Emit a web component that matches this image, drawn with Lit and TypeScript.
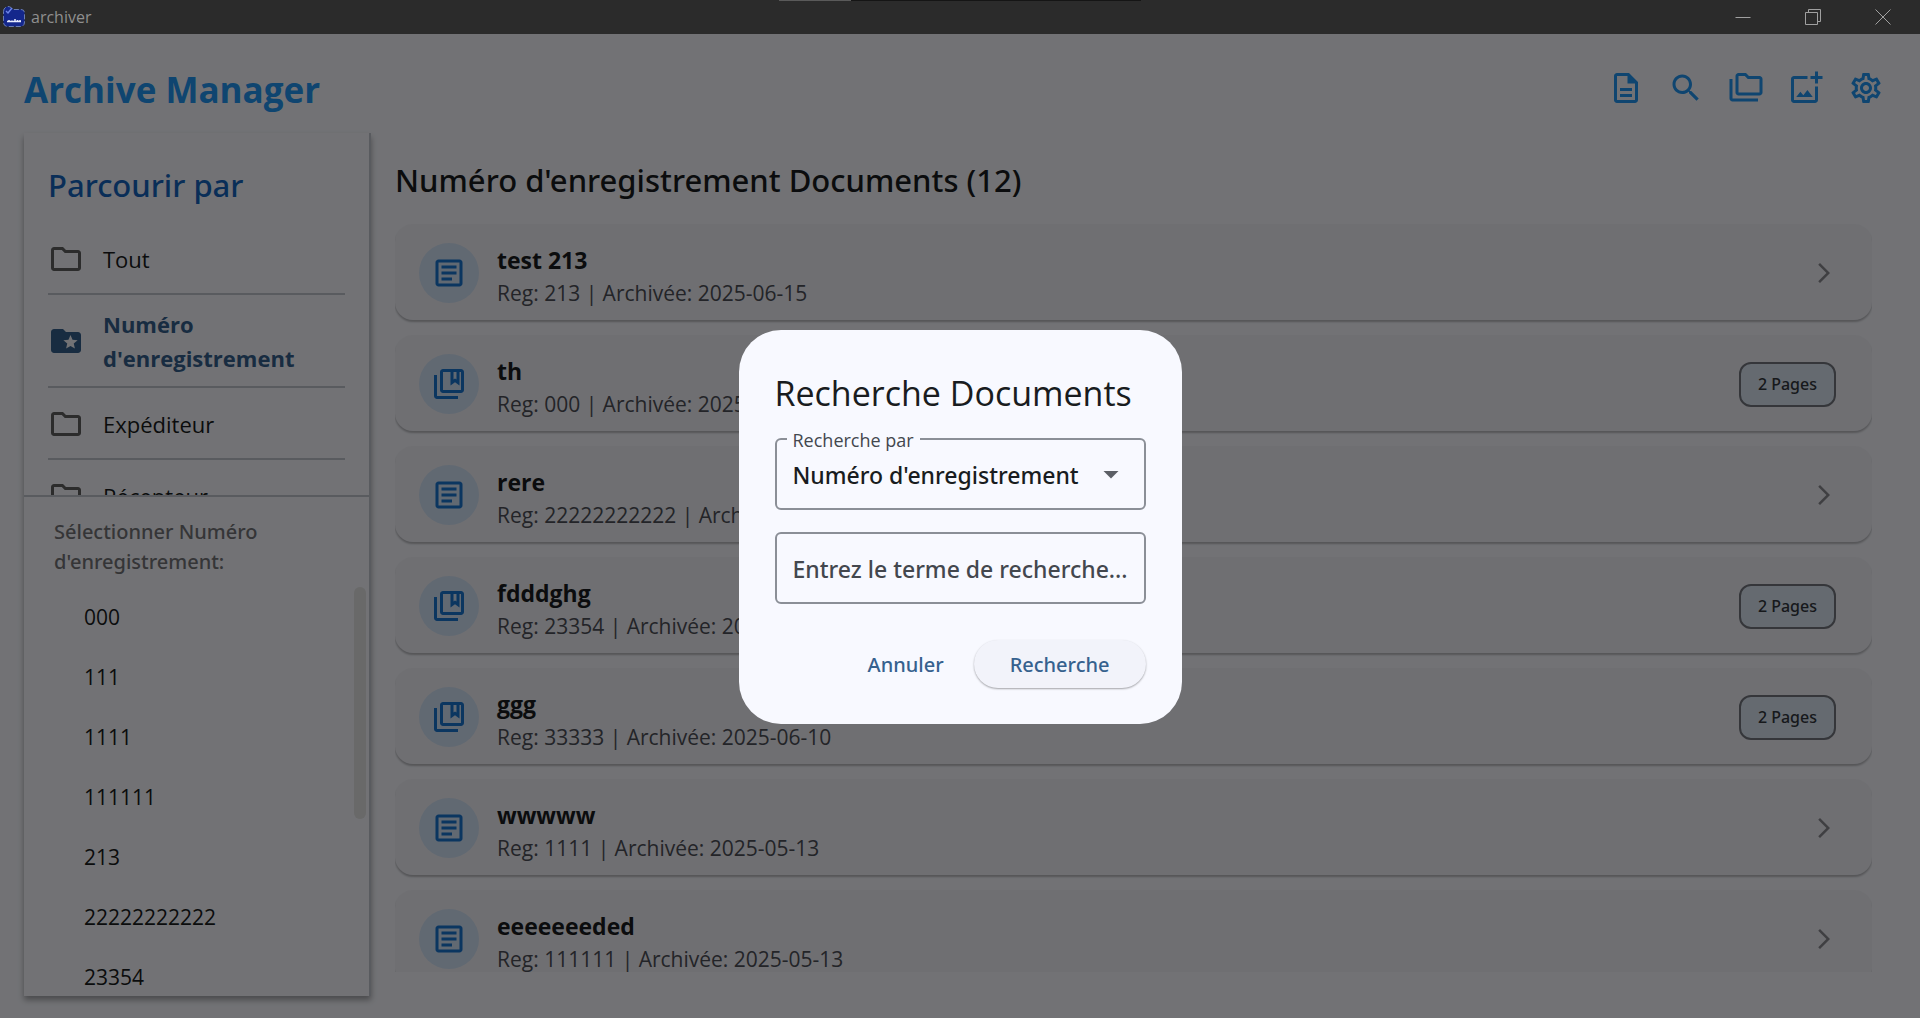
import { LitElement, html, css, svg } from "lit";
import { customElement, property } from "lit/decorators.js";
import { classMap } from "lit/directives/class-map.js";

const ICONS: Record<string, string> = {
  description:
    "M8 16h8v2H8zm0-4h8v2H8zm6-10H6c-1.1 0-2 .9-2 2v16c0 1.1.89 2 1.99 2H18c1.1 0 2-.9 2-2V8l-6-6zm4 18H6V4h7v5h5v11z",
  search:
    "M15.5 14h-.79l-.28-.27C15.41 12.59 16 11.11 16 9.5 16 5.91 13.09 3 9.5 3S3 5.91 3 9.5 5.91 16 9.5 16c1.61 0 3.09-.59 4.23-1.57l.27.28v.79l5 4.99L20.49 19l-4.99-5zm-6 0C7.01 14 5 11.99 5 9.5S7.01 5 9.5 5 14 7.01 14 9.5 11.99 14 9.5 14z",
  folders:
    "M3 19h17v2H3c-1.1 0-2-.9-2-2V6h2v13zM23 6v9c0 1.1-.9 2-2 2H7c-1.1 0-2-.9-2-2l.01-11c0-1.1.89-2 1.99-2h5l2 2h7c1.1 0 2 .9 2 2zM7 15h14V6h-7.83l-2-2H7v11z",
  addPhoto:
    "M18 20H4V6h9V4H4c-1.1 0-2 .9-2 2v14c0 1.1.9 2 2 2h14c1.1 0 2-.9 2-2v-9h-2v9zm-7.79-3.17-1.96-2.36L5.5 18h11l-3.54-4.71zM20 4V1h-2v3h-3c.01.01 0 2 0 2h3v2.99c.01.01 2 0 2 0V6h3V4h-3z",
  settings:
    "M19.43 12.98c.04-.32.07-.64.07-.98 0-.34-.03-.66-.07-.98l2.11-1.65c.19-.15.24-.42.12-.64l-2-3.46c-.09-.16-.26-.25-.44-.25-.06 0-.12.01-.17.03l-2.49 1c-.52-.4-1.08-.73-1.69-.98l-.38-2.65C14.46 2.18 14.25 2 14 2h-4c-.25 0-.46.18-.49.42l-.38 2.65c-.61.25-1.17.59-1.69.98l-2.49-1c-.06-.02-.12-.03-.18-.03-.17 0-.34.09-.43.25l-2 3.46c-.13.22-.07.49.12.64l2.11 1.65c-.04.32-.07.65-.07.98 0 .33.03.66.07.98l-2.11 1.65c-.19.15-.24.42-.12.64l2 3.46c.09.16.26.25.44.25.06 0 .12-.01.17-.03l2.49-1c.52.4 1.08.73 1.69.98l.38 2.65c.03.24.24.42.49.42h4c.25 0 .46-.18.49-.42l.38-2.65c.61-.25 1.17-.59 1.69-.98l2.49 1c.06.02.12.03.18.03.17 0 .34-.09.43-.25l2-3.46c.12-.22.07-.49-.12-.64l-2.11-1.65zm-1.98-1.71c.04.31.05.52.05.73 0 .21-.02.43-.05.73l-.14 1.13.89.7 1.08.84-.7 1.21-1.27-.51-1.04-.42-.9.68c-.43.32-.84.56-1.25.73l-1.06.43-.16 1.13-.2 1.35h-1.4l-.19-1.35-.16-1.13-1.06-.43c-.43-.18-.83-.41-1.23-.71l-.91-.7-1.06.43-1.27.51-.7-1.21 1.08-.84.89-.7-.14-1.13c-.03-.31-.05-.54-.05-.74s.02-.43.05-.73l.14-1.13-.89-.7-1.08-.84.7-1.21 1.27.51 1.04.42.9-.68c.43-.32.84-.56 1.25-.73l1.06-.43.16-1.13.2-1.35h1.39l.19 1.35.16 1.13 1.06.43c.43.18.83.41 1.23.71l.91.7 1.06-.43 1.27-.51.7 1.21-1.07.85-.89.7.14 1.13zM12 8c-2.21 0-4 1.79-4 4s1.79 4 4 4 4-1.79 4-4-1.79-4-4-4zm0 6c-1.1 0-2-.9-2-2s.9-2 2-2 2 .9 2 2-.9 2-2 2z",
  folder:
    "M9.17 6l2 2H20v10H4V6h5.17M10 4H4c-1.1 0-1.99.9-1.99 2L2 18c0 1.1.9 2 2 2h16c1.1 0 2-.9 2-2V8c0-1.1-.9-2-2-2h-8l-2-2z",
  folderStar:
    "M20 6h-8l-2-2H4c-1.1 0-1.99.9-1.99 2L2 18c0 1.1.9 2 2 2h16c1.1 0 2-.9 2-2V8c0-1.1-.9-2-2-2zM17.94 17L15 15.28 12.06 17l.78-3.33-2.59-2.24 3.41-.29L15 8l1.34 3.14 3.41.29-2.59 2.24.78 3.33z",
  article:
    "M19 5v14H5V5h14m0-2H5c-1.1 0-2 .9-2 2v14c0 1.1.9 2 2 2h14c1.1 0 2-.9 2-2V5c0-1.1-.9-2-2-2zM14 17H7v-2h7v2zm3-4H7v-2h10v2zm0-4H7V7h10v2z",
  bookmarks:
    "M4 6H2v14c0 1.1.9 2 2 2h14v-2H4V6zm16-4H8c-1.1 0-2 .9-2 2v12c0 1.1.9 2 2 2h12c1.1 0 2-.9 2-2V4c0-1.1-.9-2-2-2zm-3 2v5l-1-.75L15 9V4h2zm3 12H8V4h5v9l3-2.25L19 13V4h1v12z",
  forward: "M6.23 20.23L8 22l10-10L8 2 6.23 3.77 14.46 12z",
  dropdown: "M7 10l5 5 5-5z",
};

@customElement("app-icon")
export class AppIcon extends LitElement {
  @property() name = "folder";

  static styles = css`
    :host {
      display: block;
      flex: none;
      width: 36px;
      height: 36px;
    }
    .glyph {
      display: block;
      width: 100%;
      height: 100%;
      fill: currentColor;
      fill-rule: evenodd;
    }
  `;

  render() {
    return html`<svg class="glyph" viewBox="0 0 24 24" aria-hidden="true">
      ${svg`<path d=${ICONS[this.name]}></path>`}
    </svg>`;
  }
}

interface Doc {
  title: string;
  reg: string;
  date: string;
  pages?: number;
}

@customElement("document-card")
export class DocumentCard extends LitElement {
  @property({ attribute: false }) doc!: Doc;

  static styles = css`
    :host {
      display: block;
      flex: none;
    }
    .card {
      display: flex;
      align-items: center;
      gap: 18px;
      width: 100%;
      height: 96px;
      padding: 2px 36px 0 24px;
      box-sizing: border-box;
      border: 0;
      border-radius: 18px;
      background: #f2f2f9;
      box-shadow: 0 2px 2px rgba(0, 0, 0, 0.25);
      font: inherit;
      text-align: left;
    }
    .avatar {
      display: grid;
      place-items: center;
      flex: none;
      width: 60px;
      height: 60px;
      border-radius: 50%;
      background: #d3e4f9;
      color: #1976d2;
    }
    .text {
      flex: 1;
      min-width: 0;
      padding-top: 8px;
    }
    .title {
      display: block;
      font-size: 23px;
      line-height: 32px;
      font-weight: 700;
      color: #191c20;
    }
    .meta {
      display: block;
      font-size: 21px;
      line-height: 34px;
      color: #4e5058;
    }
    .pages {
      padding: 0 17px;
      border: 2px solid #73777f;
      border-radius: 12px;
      background: #dce8f5;
      color: #33373d;
      font-family: var(--medium-font);
      font-size: 16px;
      line-height: 41px;
      font-weight: 500;
    }
    .arrow {
      width: 24px;
      height: 24px;
      color: #8a8a90;
    }
  `;

  render() {
    const { title, reg, date, pages } = this.doc;
    return html`<button class="card" type="button">
      <span class="avatar">
        <app-icon name=${pages ? "bookmarks" : "article"}></app-icon>
      </span>
      <span class="text">
        <span class="title">${title}</span>
        <span class="meta">Reg: ${reg} | Archivée: ${date}</span>
      </span>
      ${pages
        ? html`<span class="pages">${pages} Pages</span>`
        : html`<app-icon class="arrow" name="forward"></app-icon>`}
    </button>`;
  }
}

@customElement("browse-panel")
export class BrowsePanel extends LitElement {
  private categories = ["Tout", "Numéro d'enregistrement", "Expéditeur", "Récepteur"];
  private selected = "Numéro d'enregistrement";
  private values = ["000", "111", "1111", "111111", "213", "22222222222", "23354"];

  static styles = css`
    :host {
      display: flex;
      flex-direction: column;
      flex: none;
      width: 347px;
      box-sizing: border-box;
      border-right: 2px solid #c3c6cf;
      background: #f8f9ff;
      box-shadow: 0 4px 6px rgba(0, 0, 0, 0.35);
    }
    .categories {
      flex: 0 0 362px;
      box-sizing: border-box;
      overflow: hidden;
      padding: 24px 24px 0;
    }
    .heading {
      margin: 0 0 10px;
      font-family: var(--medium-font);
      font-size: 31px;
      line-height: 56px;
      font-weight: 500;
      color: #1565c0;
    }
    .list {
      margin: 0;
      padding: 0;
      list-style: none;
    }
    .entry {
      border-bottom: 2px solid #c3c6cf;
    }
    .category {
      display: flex;
      align-items: center;
      gap: 19px;
      width: 100%;
      min-height: 70px;
      padding: 12px 0 11px;
      border: 0;
      background: none;
      color: #191c20;
      font: inherit;
      font-size: 22px;
      line-height: 34px;
      text-align: left;
    }
    .category app-icon {
      color: #616161;
    }
    .category.on,
    .category.on app-icon {
      color: #36618e;
      font-weight: 700;
    }
    .values {
      display: flex;
      flex-direction: column;
      flex: 1;
      min-height: 0;
      border-top: 2px solid #c3c6cf;
    }
    .prompt {
      margin: 0;
      padding: 20px 30px 10px;
      font-family: var(--medium-font);
      font-size: 20px;
      line-height: 30px;
      font-weight: 500;
      color: #757579;
    }
    .scroller {
      display: flex;
      flex: 1;
      min-height: 0;
      overflow: hidden;
    }
    .options {
      flex: 1;
      margin: 0;
      padding: 0;
      list-style: none;
    }
    .option {
      display: block;
      width: 100%;
      padding: 0 60px;
      border: 0;
      background: none;
      color: #191c20;
      font: inherit;
      font-size: 21px;
      line-height: 60px;
      text-align: left;
    }
    .thumb {
      flex: none;
      width: 12px;
      height: 232px;
      margin-right: 3px;
      border-radius: 6px;
      background: #e4e4e4;
    }
  `;

  render() {
    return html`
      <nav class="categories">
        <h2 class="heading">Parcourir par</h2>
        <ul class="list">
          ${this.categories.map((name) => {
            const on = name === this.selected;
            return html`<li class="entry">
              <button class=${classMap({ category: true, on })} type="button">
                <app-icon name=${on ? "folderStar" : "folder"}></app-icon>
                <span>${name}</span>
              </button>
            </li>`;
          })}
        </ul>
      </nav>
      <section class="values">
        <p class="prompt">Sélectionner ${this.selected}:</p>
        <div class="scroller">
          <ul class="options">
            ${this.values.map(
              (v) => html`<li><button class="option" type="button">${v}</button></li>`,
            )}
          </ul>
          <div class="thumb"></div>
        </div>
      </section>
    `;
  }
}

@customElement("search-dialog")
export class SearchDialog extends LitElement {
  static styles = css`
    :host {
      display: grid;
      place-items: center;
      position: absolute;
      inset: 0;
      background: rgba(0, 0, 0, 0.54);
    }
    .dialog {
      position: static;
      display: flex;
      flex-direction: column;
      width: 443px;
      margin: 2px 0 0;
      padding: 36px;
      box-sizing: border-box;
      border: 0;
      border-radius: 42px;
      background: #f8f9ff;
      color: #191c20;
    }
    .title {
      margin: 0 0 18px;
      font-size: 34px;
      line-height: 54px;
      font-weight: 400;
    }
    .form {
      display: flex;
      flex-direction: column;
      gap: 22px;
    }
    .field {
      position: relative;
      display: flex;
      align-items: center;
    }
    .label {
      position: absolute;
      top: -10px;
      left: 12px;
      padding: 0 6px;
      background: #f8f9ff;
      color: #43474e;
      font-size: 18px;
      line-height: 24px;
    }
    .box {
      width: 100%;
      height: 72px;
      margin: 0;
      padding: 2px 16px 0;
      box-sizing: border-box;
      border: 2px solid #8b8f97;
      border-radius: 6px;
      background: none;
      color: #191c20;
      font-family: var(--medium-font);
      font-size: 23px;
      font-weight: 500;
      appearance: none;
    }
    .box::placeholder {
      color: #43474e;
      opacity: 1;
    }
    .caret {
      position: absolute;
      right: 17px;
      color: #5c5f66;
      pointer-events: none;
    }
    .actions {
      display: flex;
      justify-content: flex-end;
      gap: 12px;
      margin-top: 14px;
    }
    .action {
      height: 48px;
      padding: 0 18px;
      border: 0;
      border-radius: 24px;
      background: none;
      color: #36618e;
      font-family: var(--medium-font);
      font-size: 20px;
      font-weight: 500;
    }
    .action.raised {
      padding: 0 36px;
      background: #f2f3fa;
      box-shadow: 0 1px 2px rgba(0, 0, 0, 0.35);
    }
  `;

  render() {
    return html`<dialog class="dialog" open aria-labelledby="title">
      <h2 class="title" id="title">Recherche Documents</h2>
      <form class="form" @submit=${(e: Event) => e.preventDefault()}>
        <div class="field">
          <label class="label" for="by">Recherche par</label>
          <select class="box" id="by">
            <option>Numéro d'enregistrement</option>
            <option>Expéditeur</option>
            <option>Récepteur</option>
          </select>
          <app-icon class="caret" name="dropdown"></app-icon>
        </div>
        <div class="field">
          <input
            class="box"
            type="text"
            aria-label="Entrez le terme de recherche..."
            placeholder="Entrez le terme de recherche..."
          />
        </div>
        <div class="actions">
          <button class="action" type="button">Annuler</button>
          <button class="action raised" type="submit">Recherche</button>
        </div>
      </form>
    </dialog>`;
  }
}

@customElement("app-root")
export class AppRoot extends LitElement {
  private tools = [
    ["description", "Documents"],
    ["search", "Recherche"],
    ["folders", "Dossiers"],
    ["addPhoto", "Ajouter une image"],
    ["settings", "Paramètres"],
  ];

  private docs: Doc[] = [
    { title: "test 213", reg: "213", date: "2025-06-15" },
    { title: "th", reg: "000", date: "2025-06-14", pages: 2 },
    { title: "rere", reg: "22222222222", date: "2025-06-14" },
    { title: "fdddghg", reg: "23354", date: "2025-06-10", pages: 2 },
    { title: "ggg", reg: "33333", date: "2025-06-10", pages: 2 },
    { title: "wwwww", reg: "1111", date: "2025-05-13" },
    { title: "eeeeeeeded", reg: "111111", date: "2025-05-13" },
  ];

  static styles = css`
    :host {
      --medium-font: "Noto Sans", "Open Sans", sans-serif;
      display: flex;
      flex-direction: column;
      height: 100vh;
      overflow: hidden;
      font-family: "Open Sans", "Noto Sans", sans-serif;
    }
    .titlebar {
      position: relative;
      display: flex;
      align-items: center;
      flex: none;
      height: 34px;
      padding-right: 2px;
      background: #2b2b2b;
      color: #8f8f8f;
    }
    .handle {
      position: absolute;
      top: 0;
      left: 50%;
      width: 362px;
      height: 1px;
      margin-left: -181px;
      background: linear-gradient(to right, #5a5a5a 20%, #151515 20%);
    }
    .logo {
      width: 24px;
      height: 24px;
      margin: 0 5px 0 2px;
    }
    .caption {
      flex: 1;
      font-size: 16px;
      line-height: 24px;
    }
    .window {
      display: grid;
      place-items: center;
      width: 70px;
      height: 34px;
      padding: 0;
      border: 0;
      background: none;
      color: #a0a0a0;
    }
    .window-glyph {
      width: 16px;
      height: 16px;
      fill: none;
      stroke: currentColor;
    }
    .app {
      position: relative;
      display: flex;
      flex-direction: column;
      flex: 1;
      min-height: 0;
      background: #f8f9ff;
    }
    .header {
      display: flex;
      align-items: center;
      justify-content: space-between;
      flex: none;
      padding: 24px 24px 15px;
    }
    .brand {
      margin: 0;
      padding-top: 4px;
      font-size: 35px;
      line-height: 56px;
      font-weight: 700;
      color: #2196f3;
    }
    .tools {
      display: flex;
    }
    .tool {
      display: grid;
      place-items: center;
      width: 60px;
      height: 60px;
      padding: 0;
      border: 0;
      background: none;
      color: #2196f3;
    }
    .body {
      display: flex;
      flex: 1;
      min-height: 0;
      padding: 0 24px 22px;
    }
    .main {
      display: flex;
      flex-direction: column;
      flex: 1;
      min-width: 0;
      padding: 24px;
    }
    .heading {
      margin: 0 0 21px;
      font-family: var(--medium-font);
      font-size: 31px;
      line-height: 46px;
      font-weight: 500;
      color: #191c20;
    }
    .docs {
      display: flex;
      flex-direction: column;
      flex: 1;
      gap: 15px;
      min-height: 0;
      overflow: hidden;
    }
  `;

  private windowButton(label: string, d: string) {
    return html`<button class="window" type="button" aria-label=${label}>
      <svg class="window-glyph" viewBox="0 0 16 16">${svg`<path d=${d}></path>`}</svg>
    </button>`;
  }

  render() {
    return html`
      <div class="titlebar">
        <div class="handle"></div>
        <svg class="logo" viewBox="0 0 24 24" aria-hidden="true">
          <path
            d="M1.5 6.500Q1.5 3.500 3.500 2.500Q6 0.500 9 2.500L11 4.5H19Q22.5 4.5 22.5 8V17Q22.5 21.500 18 21.500H6Q1.5 21.500 1.5 17Z"
            fill="#14278c"
            stroke="#7d93c8"
            stroke-width="0.8"
            stroke-dasharray="5 2"
          />
          <path d="M4 6l2 2 4-5" fill="none" stroke="#6f86e8" stroke-width="1.4" />
          <path
            d="M5 16.5h14M7 15v1.5M10 15.5v1M13 14v2.5M15.5 15v1.5M18 15v1.5"
            fill="none"
            stroke="#e8ecff"
            stroke-width="1.5"
          />
        </svg>
        <span class="caption">archiver</span>
        ${this.windowButton("Réduire", "M0.5 8.5h15")}
        ${this.windowButton("Restaurer", "M0.5 3.5h12v12h-12zM3.5 3.5v-3h12v12h-3")}
        ${this.windowButton("Fermer", "M0.5 0.5l15 15M15.5 0.5l-15 15")}
      </div>
      <div class="app">
        <header class="header">
          <h1 class="brand">Archive Manager</h1>
          <div class="tools">
            ${this.tools.map(
              ([icon, label]) => html`<button class="tool" type="button" aria-label=${label}>
                <app-icon name=${icon}></app-icon>
              </button>`,
            )}
          </div>
        </header>
        <div class="body">
          <browse-panel></browse-panel>
          <main class="main">
            <h2 class="heading">Numéro d'enregistrement Documents (12)</h2>
            <div class="docs">
              ${this.docs.map((doc) => html`<document-card .doc=${doc}></document-card>`)}
            </div>
          </main>
        </div>
        <search-dialog></search-dialog>
      </div>
    `;
  }
}
